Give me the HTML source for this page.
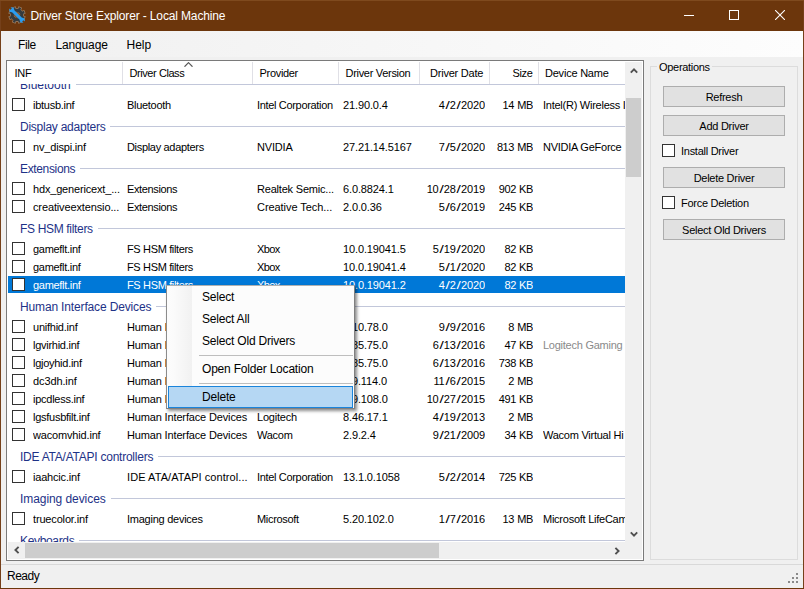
<!DOCTYPE html>
<html><head><meta charset="utf-8"><title>Driver Store Explorer</title>
<style>
html,body{margin:0;padding:0;}
body{width:804px;height:589px;overflow:hidden;background:#f0f0f0;font-family:"Liberation Sans",sans-serif;position:relative;}
div,span,u,b,i{box-sizing:border-box;}
.abs{position:absolute;}
#win{position:absolute;left:0;top:0;width:804px;height:589px;background:#f0f0f0;overflow:hidden;}
#title{position:absolute;left:0;top:0;width:804px;height:31px;background:#6c360c;}
#title .t{position:absolute;left:30.5px;top:9px;font-size:12px;line-height:15px;color:#fff;white-space:nowrap;letter-spacing:-0.14px;}
#menubar{position:absolute;left:1px;top:31px;width:802px;height:26px;background:linear-gradient(to right,#f0f0f0,#fdfdfd);}
#menubar span{position:absolute;top:7px;font-size:12px;line-height:15px;color:#000;white-space:nowrap;}
#bl{position:absolute;left:0;top:0;width:1px;height:589px;background:#75401a;}
#br{position:absolute;left:803px;top:0;width:1px;height:589px;background:#75401a;}
#bt{position:absolute;left:0;top:0;width:804px;height:1px;background:#7f4a1e;}
#bb{position:absolute;left:0;top:588px;width:804px;height:1px;background:#6c360c;}
#lv{position:absolute;left:6px;top:60px;width:638px;height:501px;border:1px solid #7a7a7a;background:#fff;overflow:hidden;}
#lvin{position:absolute;left:0;top:0;width:618px;height:481px;overflow:hidden;background:#fff;}
.hdr{position:absolute;left:0;top:0;width:619px;height:23px;background:#fff;z-index:3;}
.hdr span{position:absolute;top:6px;font-size:11px;line-height:13px;color:#000;white-space:nowrap;letter-spacing:-0.35px;}
.hdr i{position:absolute;top:1px;width:1px;height:22px;background:#e0e0e6;}
.grp{position:absolute;left:0;width:619px;height:24px;}
.grp span{position:absolute;left:13px;top:6px;font-size:12px;line-height:15px;color:#1e3287;white-space:nowrap;background:#fff;padding-right:5px;z-index:1;letter-spacing:-0.22px;}
.grp i{position:absolute;left:13px;right:0;top:12px;height:1px;background:#c2c7da;}
.row{position:absolute;left:0;width:619px;height:18px;font-size:11px;line-height:13px;color:#000;letter-spacing:-0.25px;}
.row s{display:inline-block;width:5.2px;text-align:center;text-decoration:none;letter-spacing:0;transform:scaleX(1.4);}
.row.sel{color:#fff;}
.row.sel b{position:absolute;left:1px;top:0;width:618px;height:17px;background:#0078d7;}
.row u{position:absolute;left:5px;top:2px;width:13px;height:13px;border:1px solid #333;background:#fff;}
.row span{position:absolute;top:3px;white-space:nowrap;overflow:hidden;}
.c1{left:26px;width:89px;}
.c2{left:120px;width:124px;}
.c3{left:250px;width:82px;}
.c4{left:336px;width:78px;letter-spacing:-0.12px;}
.c5{left:413px;width:65px;text-align:right;letter-spacing:-0.12px;}
.c6{left:482px;width:44px;text-align:right;letter-spacing:-0.4px;word-spacing:0.6px;}
.c7{left:536px;width:84px;}
.gray{color:#8a8a8a;}
#vs{position:absolute;left:618px;top:1px;width:17px;height:480px;background:#f0f0f0;}
#vs .th{position:absolute;left:1px;top:36px;width:15px;height:79px;background:#cdcdcd;}
#hs{position:absolute;left:1px;top:481px;width:617px;height:17px;background:#f0f0f0;}
#hs .th{position:absolute;left:17px;top:1px;width:414px;height:15px;background:#cdcdcd;}
#corner{position:absolute;left:618px;top:481px;width:17px;height:17px;background:#f0f0f0;}
.arr{position:absolute;overflow:visible;}
#gb{position:absolute;left:650px;top:66px;width:148px;height:494px;border:1px solid #dcdcdc;}
#gbl{position:absolute;left:657px;top:61px;padding:0 2px;background:#f0f0f0;font-size:11px;line-height:13px;color:#000;letter-spacing:-0.3px;}
.btn{position:absolute;left:663px;width:122px;height:21px;border:1px solid #adadad;background:#e1e1e1;font-size:11px;line-height:20px;text-align:center;color:#000;letter-spacing:-0.27px;}
.cb{position:absolute;left:662px;width:13px;height:13px;border:1px solid #333;background:#fff;}
.cbl{position:absolute;left:681px;font-size:11px;line-height:13px;color:#000;white-space:nowrap;letter-spacing:-0.27px;}
#status{position:absolute;left:1px;top:564px;width:802px;height:24px;background:#f0f0f0;border-top:1px solid #d9d9d9;}
#status span{position:absolute;left:6px;top:4px;font-size:12px;line-height:15px;color:#000;letter-spacing:-0.5px;}
#menu{position:absolute;left:166px;top:285px;width:189px;height:124px;background:#fcfcfc;border:1px solid #b0b0b0;border-left-color:#8c8c8c;border-right-color:#808080;border-bottom-color:#808080;box-shadow:2px 2px 3px rgba(0,0,0,0.45);z-index:10;}
#menu .m{position:absolute;left:0;top:0;width:25px;height:122px;background:linear-gradient(to right,#fcfcfc 0,#fbfbfb 25%,#f1f1f1 100%);}
#menu span{position:absolute;left:35px;font-size:12px;line-height:15px;color:#000;white-space:nowrap;letter-spacing:-0.2px;}
#menu i{position:absolute;left:32px;width:154px;height:1px;background:#bebebe;}
#menu b{position:absolute;box-sizing:border-box;left:1px;top:100px;width:185px;height:22px;background:#b5d7f3;border:1px solid #1a84db;}
</style></head><body>
<div id="win">
<div id="title">
<svg class="abs" style="left:8px;top:5.5px" width="18" height="18" viewBox="-9 -9 18 18">
<g fill="#d9bfa0" fill-opacity="0.55" stroke="#d9bfa0" stroke-opacity="0.55" stroke-width="1.2" transform="rotate(22.5)"><rect x="-1.3" y="-8" width="2.6" height="3" transform="rotate(0)"/><rect x="-1.3" y="-8" width="2.6" height="3" transform="rotate(45)"/><rect x="-1.3" y="-8" width="2.6" height="3" transform="rotate(90)"/><rect x="-1.3" y="-8" width="2.6" height="3" transform="rotate(135)"/><rect x="-1.3" y="-8" width="2.6" height="3" transform="rotate(180)"/><rect x="-1.3" y="-8" width="2.6" height="3" transform="rotate(225)"/><rect x="-1.3" y="-8" width="2.6" height="3" transform="rotate(270)"/><rect x="-1.3" y="-8" width="2.6" height="3" transform="rotate(315)"/><circle r="4.7" fill="none" stroke-width="4.2"/></g>
<g fill="#363b3e" transform="rotate(22.5)"><rect x="-1.3" y="-8" width="2.6" height="3" transform="rotate(0)"/><rect x="-1.3" y="-8" width="2.6" height="3" transform="rotate(45)"/><rect x="-1.3" y="-8" width="2.6" height="3" transform="rotate(90)"/><rect x="-1.3" y="-8" width="2.6" height="3" transform="rotate(135)"/><rect x="-1.3" y="-8" width="2.6" height="3" transform="rotate(180)"/><rect x="-1.3" y="-8" width="2.6" height="3" transform="rotate(225)"/><rect x="-1.3" y="-8" width="2.6" height="3" transform="rotate(270)"/><rect x="-1.3" y="-8" width="2.6" height="3" transform="rotate(315)"/><circle r="4.7" fill="none" stroke="#363b3e" stroke-width="3.2"/></g>
<circle r="2.4" fill="#8a5a34"/>
<path d="M-5.4 -5.4 L5.4 5.4" stroke="#2a9df0" stroke-width="2.9"/>
<circle cx="-5.3" cy="-5.3" r="2.5" fill="#2a9df0"/>
<circle cx="5.3" cy="5.3" r="2.5" fill="#2a9df0"/>
<path d="M-8.2 -8.2 L-5.8 -5.8" stroke="#6c360c" stroke-width="1.7"/>
<path d="M8.2 8.2 L5.8 5.8" stroke="#6c360c" stroke-width="1.7"/>
</svg>
<span class="t">Driver Store Explorer - Local Machine</span>
<svg class="abs" style="left:684px;top:15px" width="10" height="1"><rect width="10" height="1" fill="#fff"/></svg>
<svg class="abs" style="left:729px;top:10px" width="10" height="10"><rect x="0.5" y="0.5" width="9" height="9" fill="none" stroke="#fff" stroke-width="1"/></svg>
<svg class="abs" style="left:775px;top:10px" width="10" height="10"><path d="M0 0 L10 10 M10 0 L0 10" stroke="#fff" stroke-width="1.1"/></svg>
</div>
<div id="menubar"><span style="left:17px;letter-spacing:-0.4px">File</span><span style="left:54.5px;letter-spacing:-0.15px">Language</span><span style="left:125.5px">Help</span></div>

<div id="lv"><div id="lvin">
<div class="hdr">
<span style="left:7.5px;letter-spacing:-0.3px">INF</span><span style="left:122.5px;letter-spacing:-0.43px">Driver Class</span><span style="left:252.6px;letter-spacing:-0.33px">Provider</span><span style="left:338.5px;letter-spacing:-0.3px">Driver Version</span><span style="right:142.8px;letter-spacing:-0.22px">Driver Date</span><span style="right:93.6px;letter-spacing:-0.35px">Size</span><span style="left:538px;letter-spacing:-0.22px">Device Name</span>
<i style="left:115px"></i>
<i style="left:245px"></i>
<i style="left:331px"></i>
<i style="left:412px"></i>
<i style="left:482px"></i>
<i style="left:531px"></i>
<svg class="abs" style="left:177px;top:1px" width="9" height="5"><path d="M0.5 4.7 L4.5 0.7 L8.5 4.7" fill="none" stroke="#555" stroke-width="1.2"/></svg>
</div>
<div class="grp" style="top:11px"><i></i><span style="letter-spacing:0px">Bluetooth</span></div>
<div class="row" style="top:35px"><u></u><span class="c1" style="letter-spacing:-0.27px">ibtusb.inf</span><span class="c2" style="letter-spacing:-0.29px">Bluetooth</span><span class="c3" style="letter-spacing:-0.33px">Intel Corporation</span><span class="c4">21.90.0.4</span><span class="c5">4<s>/</s>2<s>/</s>2020</span><span class="c6">14 MB</span><span class="c7">Intel(R) Wireless I</span></div>
<div class="grp" style="top:53px"><i></i><span style="letter-spacing:-0.25px">Display adapters</span></div>
<div class="row" style="top:77px"><u></u><span class="c1" style="letter-spacing:-0.18px">nv_dispi.inf</span><span class="c2" style="letter-spacing:-0.32px">Display adapters</span><span class="c3" style="letter-spacing:-0.17px">NVIDIA</span><span class="c4">27.21.14.5167</span><span class="c5">7<s>/</s>5<s>/</s>2020</span><span class="c6">813 MB</span><span class="c7">NVIDIA GeForce</span></div>
<div class="grp" style="top:95px"><i></i><span style="letter-spacing:-0.35px">Extensions</span></div>
<div class="row" style="top:119px"><u></u><span class="c1" style="letter-spacing:-0.17px">hdx_genericext_...</span><span class="c2" style="letter-spacing:-0.36px">Extensions</span><span class="c3" style="letter-spacing:-0.2px">Realtek Semic...</span><span class="c4">6.0.8824.1</span><span class="c5">10<s>/</s>28<s>/</s>2019</span><span class="c6">902 KB</span></div>
<div class="row" style="top:137px"><u></u><span class="c1" style="letter-spacing:-0.13px">creativeextensio...</span><span class="c2" style="letter-spacing:-0.36px">Extensions</span><span class="c3" style="letter-spacing:-0.06px">Creative Tech...</span><span class="c4">2.0.0.36</span><span class="c5">5<s>/</s>6<s>/</s>2019</span><span class="c6">245 KB</span></div>
<div class="grp" style="top:155px"><i></i><span style="letter-spacing:-0.33px">FS HSM filters</span></div>
<div class="row" style="top:179px"><u></u><span class="c1" style="letter-spacing:-0.29px">gameflt.inf</span><span class="c2" style="letter-spacing:-0.35px">FS HSM filters</span><span class="c3" style="letter-spacing:-0.62px">Xbox</span><span class="c4">10.0.19041.5</span><span class="c5">5<s>/</s>19<s>/</s>2020</span><span class="c6">82 KB</span></div>
<div class="row" style="top:197px"><u></u><span class="c1" style="letter-spacing:-0.29px">gameflt.inf</span><span class="c2" style="letter-spacing:-0.35px">FS HSM filters</span><span class="c3" style="letter-spacing:-0.62px">Xbox</span><span class="c4">10.0.19041.4</span><span class="c5">5<s>/</s>1<s>/</s>2020</span><span class="c6">82 KB</span></div>
<div class="row sel" style="top:215px"><b></b><u></u><span class="c1" style="letter-spacing:-0.29px">gameflt.inf</span><span class="c2" style="letter-spacing:-0.35px">FS HSM filters</span><span class="c3" style="letter-spacing:-0.62px">Xbox</span><span class="c4">10.0.19041.2</span><span class="c5">4<s>/</s>2<s>/</s>2020</span><span class="c6">82 KB</span></div>
<div class="grp" style="top:233px"><i></i><span style="letter-spacing:-0.15px">Human Interface Devices</span></div>
<div class="row" style="top:257px"><u></u><span class="c1" style="letter-spacing:-0.24px">unifhid.inf</span><span class="c2" style="letter-spacing:-0.15px">Human Interface Devices</span><span class="c3" style="letter-spacing:-0.2px">Logitech</span><span class="c4">1.10.78.0</span><span class="c5">9<s>/</s>9<s>/</s>2016</span><span class="c6">8 MB</span></div>
<div class="row" style="top:275px"><u></u><span class="c1" style="letter-spacing:-0.27px">lgvirhid.inf</span><span class="c2" style="letter-spacing:-0.15px">Human Interface Devices</span><span class="c3" style="letter-spacing:-0.2px">Logitech</span><span class="c4">8.85.75.0</span><span class="c5">6<s>/</s>13<s>/</s>2016</span><span class="c6">47 KB</span><span class="c7 gray">Logitech Gaming</span></div>
<div class="row" style="top:293px"><u></u><span class="c1" style="letter-spacing:-0.27px">lgjoyhid.inf</span><span class="c2" style="letter-spacing:-0.15px">Human Interface Devices</span><span class="c3" style="letter-spacing:-0.2px">Logitech</span><span class="c4">8.85.75.0</span><span class="c5">6<s>/</s>13<s>/</s>2016</span><span class="c6">738 KB</span></div>
<div class="row" style="top:311px"><u></u><span class="c1" style="letter-spacing:-0.11px">dc3dh.inf</span><span class="c2" style="letter-spacing:-0.15px">Human Interface Devices</span><span class="c3" style="letter-spacing:-0.2px">Logitech</span><span class="c4">5.9.114.0</span><span class="c5">11<s>/</s>6<s>/</s>2015</span><span class="c6">2 MB</span></div>
<div class="row" style="top:329px"><u></u><span class="c1" style="letter-spacing:-0.26px">ipcdless.inf</span><span class="c2" style="letter-spacing:-0.15px">Human Interface Devices</span><span class="c3" style="letter-spacing:-0.2px">Logitech</span><span class="c4">5.9.108.0</span><span class="c5">10<s>/</s>27<s>/</s>2015</span><span class="c6">491 KB</span></div>
<div class="row" style="top:347px"><u></u><span class="c1" style="letter-spacing:-0.26px">lgsfusbfilt.inf</span><span class="c2" style="letter-spacing:-0.15px">Human Interface Devices</span><span class="c3" style="letter-spacing:-0.2px">Logitech</span><span class="c4">8.46.17.1</span><span class="c5">4<s>/</s>19<s>/</s>2013</span><span class="c6">2 MB</span></div>
<div class="row" style="top:365px"><u></u><span class="c1" style="letter-spacing:-0.17px">wacomvhid.inf</span><span class="c2" style="letter-spacing:-0.15px">Human Interface Devices</span><span class="c3" style="letter-spacing:-0.27px">Wacom</span><span class="c4">2.9.2.4</span><span class="c5">9<s>/</s>21<s>/</s>2009</span><span class="c6">34 KB</span><span class="c7">Wacom Virtual Hi</span></div>
<div class="grp" style="top:383px"><i></i><span style="letter-spacing:-0.24px">IDE ATA/ATAPI controllers</span></div>
<div class="row" style="top:407px"><u></u><span class="c1" style="letter-spacing:-0.19px">iaahcic.inf</span><span class="c2" style="letter-spacing:0.07px">IDE ATA/ATAPI control...</span><span class="c3" style="letter-spacing:-0.33px">Intel Corporation</span><span class="c4">13.1.0.1058</span><span class="c5">5<s>/</s>2<s>/</s>2014</span><span class="c6">725 KB</span></div>
<div class="grp" style="top:425px"><i></i><span style="letter-spacing:-0.07px">Imaging devices</span></div>
<div class="row" style="top:449px"><u></u><span class="c1" style="letter-spacing:-0.16px">truecolor.inf</span><span class="c2" style="letter-spacing:-0.25px">Imaging devices</span><span class="c3" style="letter-spacing:-0.31px">Microsoft</span><span class="c4">5.20.102.0</span><span class="c5">1<s>/</s>7<s>/</s>2016</span><span class="c6">13 MB</span><span class="c7">Microsoft LifeCam</span></div>
<div class="grp" style="top:467px"><i></i><span style="letter-spacing:-0.34px">Keyboards</span></div>
</div>
<div id="vs"><div class="th"></div>
<svg class="arr" style="left:4.5px;top:5.4px" width="8" height="7" viewBox="-4 -3.5 8 7"><path d="M-3.2 2.1 L0 -1.1 L3.2 2.1" fill="none" stroke="#505050" stroke-width="1.9"/></svg>
<svg class="arr" style="left:4.6px;top:468.6px" width="8" height="7" viewBox="-4 -3.5 8 7"><path d="M-3.2 -2.1 L0 1.1 L3.2 -2.1" fill="none" stroke="#505050" stroke-width="1.9"/></svg>
</div>
<div id="hs"><div class="th"></div>
<svg class="arr" style="left:4.6px;top:4.4px" width="7" height="8" viewBox="-3.5 -4 7 8"><path d="M2.1 -3.2 L-1.1 0 L2.1 3.2" fill="none" stroke="#505050" stroke-width="1.9"/></svg>
<svg class="arr" style="left:605.6px;top:4.5px" width="7" height="8" viewBox="-3.5 -4 7 8"><path d="M-2.1 -3.2 L1.1 0 L-2.1 3.2" fill="none" stroke="#505050" stroke-width="1.9"/></svg>
</div><div id="corner"></div>
</div>
<div id="gb"></div><div id="gbl">Operations</div>
<div class="btn" style="top:86px">Refresh</div>
<div class="btn" style="top:115px">Add Driver</div>
<div class="cb" style="top:144px"></div><div class="cbl" style="top:145px">Install Driver</div>
<div class="btn" style="top:167px">Delete Driver</div>
<div class="cb" style="top:196px"></div><div class="cbl" style="top:197px">Force Deletion</div>
<div class="btn" style="top:219px">Select Old Drivers</div>

<div id="status"><span>Ready</span>
<svg class="abs" style="left:786px;top:7px" width="12" height="12"><g fill="#8a8a8a"><rect x="9" y="1" width="2" height="2"/><rect x="5" y="5" width="2" height="2"/><rect x="9" y="5" width="2" height="2"/><rect x="1" y="9" width="2" height="2"/><rect x="5" y="9" width="2" height="2"/><rect x="9" y="9" width="2" height="2"/></g></svg>
</div>
<div id="menu"><div class="m"></div>
<b></b>
<span style="top:4px">Select</span>
<span style="top:26px">Select All</span>
<span style="top:48px">Select Old Drivers</span>
<i style="top:69px"></i>
<span style="top:76px">Open Folder Location</span>
<i style="top:97px"></i>
<span style="top:104px">Delete</span>
</div>
<div id="bl"></div><div id="br"></div><div id="bb"></div><div id="bt"></div>
</div></body></html>
